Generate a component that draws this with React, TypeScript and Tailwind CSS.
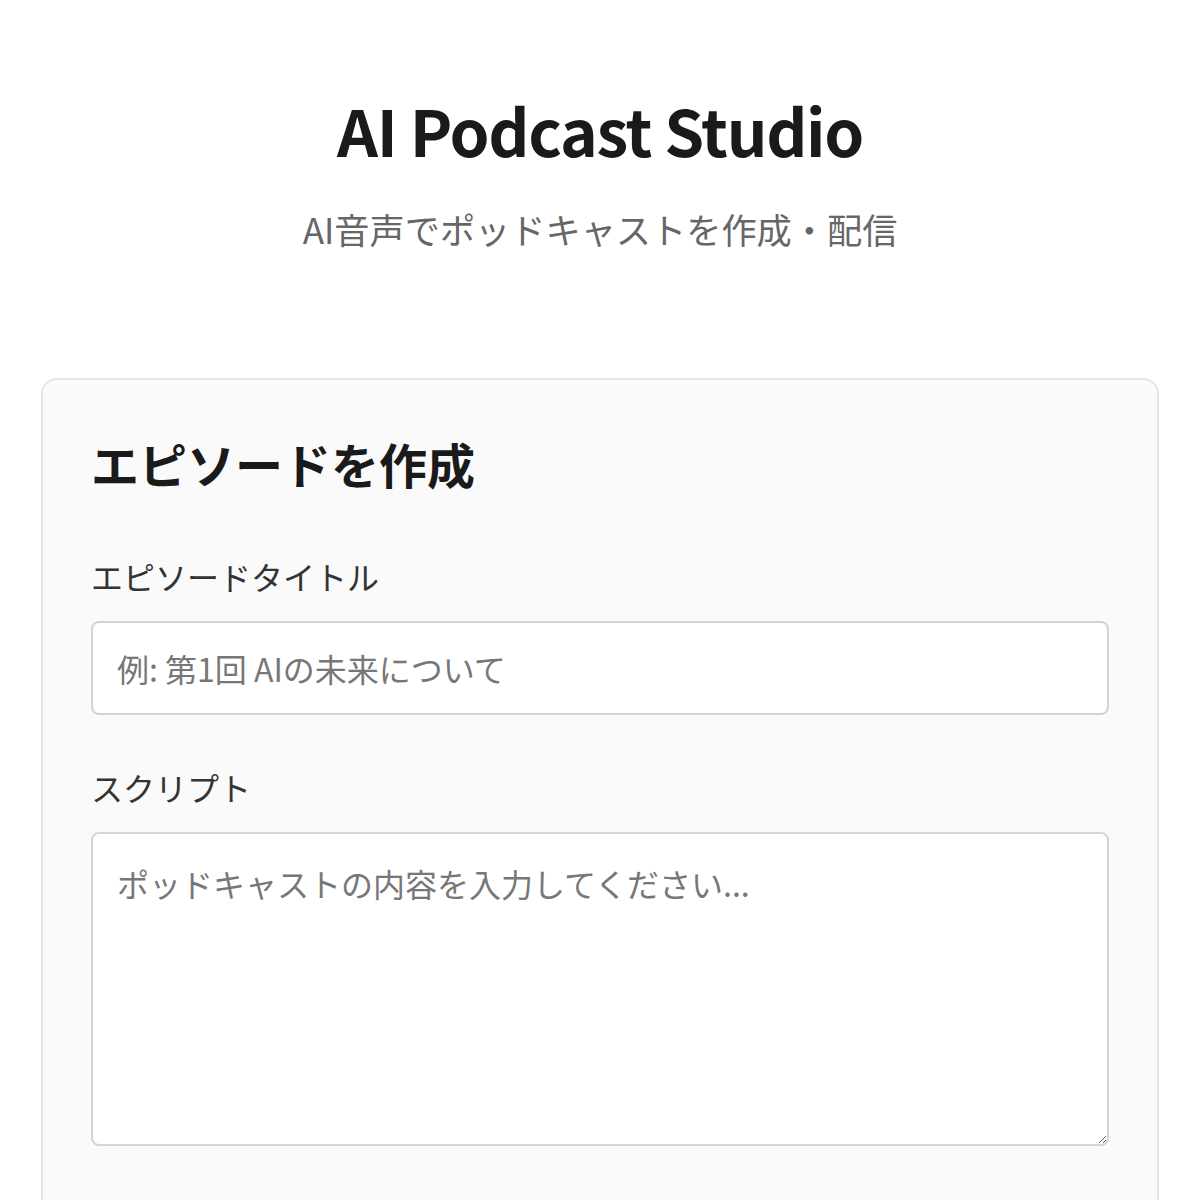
import React from "react";

export default function App() {
  const font = { fontFamily: '"Noto Sans CJK JP", "Noto Sans", sans-serif' };
  return (
    <div
      className="min-h-screen bg-white px-[41px] pt-[83px] pb-[40px]"
      style={font}
    >
      <header className="text-center">
        <h1 className="text-[64px] font-bold leading-[93px] tracking-[-0.02em] text-[#1a1a1a]">
          AI Podcast Studio
        </h1>
        <p className="mt-[27px] text-[35.2px] leading-[51px] text-[#666666]">
          AI音声でポッドキャストを作成・配信
        </p>
      </header>

      <section className="mt-[124px] rounded-[16px] border-2 border-[#e6e6e6] bg-[#fafafa] p-[48px]">
        <h2 className="text-[48px] font-bold leading-[70px] text-[#1a1a1a]">
          エピソードを作成
        </h2>

        <label className="mt-[55px] block text-[32px] leading-[46px] text-[#333333]">
          エピソードタイトル
        </label>
        <input
          type="text"
          placeholder="例: 第1回 AIの未来について"
          className="mt-[22px] block h-[94px] w-full rounded-[8px] border-2 border-[#d4d4d4] bg-white px-[24px] text-[32px] text-[#1a1a1a] outline-none placeholder:text-[#777777]"
          style={font}
        />

        <label className="mt-[49px] block text-[32px] leading-[46px] text-[#333333]">
          スクリプト
        </label>
        <textarea
          placeholder="ポッドキャストの内容を入力してください..."
          className="mt-[22px] block h-[314px] w-full rounded-[8px] border-2 border-[#d4d4d4] bg-white px-[24px] pt-[25px] pb-[24px] text-[32px] leading-[48px] text-[#1a1a1a] outline-none placeholder:text-[#777777]"
          style={font}
        />

        <div className="h-[200px]" />
      </section>
    </div>
  );
}
